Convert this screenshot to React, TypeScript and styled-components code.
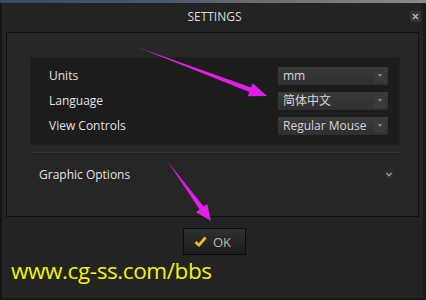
import React from 'react';
import styled, { createGlobalStyle } from 'styled-components';

const GlobalStyle = createGlobalStyle`
  html, body {
    margin: 0;
    padding: 0;
    background: #1f1f1f;
  }
  body {
    font-family: 'Open Sans', 'Noto Sans CJK SC', sans-serif;
  }
`;

const Page = styled.div`
  position: relative;
  width: 426px;
  height: 300px;
  overflow: hidden;
  display: flex;
  flex-direction: column;
  background: #232323;
`;

const Desktop = styled.div`
  height: 3px;
  background: linear-gradient(90deg, #3a4a66 0%, #4a5872 40%, #6c6c6c 60%, #8a8a8a 100%);
`;

const Dialog = styled.div`
  flex: 1;
  display: flex;
  flex-direction: column;
  background: #232323;
  border-left: 2px solid #151515;
  border-right: 3px solid #1a1a1a;
  border-bottom: 2px solid #161616;
`;

const TitleBar = styled.div`
  height: 27px;
  display: grid;
  grid-template-columns: 1fr auto 1fr;
  align-items: center;
`;

const Title = styled.div`
  grid-column: 2;
  color: #dcdcdc;
  font-size: 12px;
  padding-left: 4px;
`;

const CloseBtn = styled.div`
  justify-self: end;
  margin-right: 2px;
  width: 11px;
  height: 11px;
  background: #343434;
  display: flex;
  align-items: center;
  justify-content: center;
`;

const Panel = styled.div`
  margin: 2px 4px 0 4px;
  height: 185px;
  box-sizing: border-box;
  background: #262626;
  border: 1px solid #0f0f0f;
  padding: 24px 18px 0 23px;
  display: flex;
  flex-direction: column;
`;

const Inset = styled.div`
  height: 88px;
  box-sizing: border-box;
  background: #1c1c1c;
  border: 1px solid #202020;
  padding: 5px 11px 0 18px;
  display: flex;
  flex-direction: column;
`;

const Row = styled.div`
  height: 25px;
  display: flex;
  align-items: center;
  justify-content: space-between;
`;

const Label = styled.span`
  color: #e2e2e2;
  font-size: 12px;
`;

const Select = styled.div`
  width: 110px;
  height: 18px;
  display: flex;
  align-items: center;
  background: linear-gradient(#3a3a3a, #303030);
  box-sizing: border-box;
`;

const SelectText = styled.span`
  flex: 1;
  padding-left: 5px;
  color: #d4d4d4;
  font-size: 12px;
  line-height: 18px;
  white-space: nowrap;
`;

const SelectArrow = styled.span`
  width: 12px;
  height: 14px;
  margin-right: 2px;
  background: #3a3a3a;
  display: flex;
  align-items: center;
  justify-content: center;
  &::after {
    content: '';
    border-left: 2.5px solid transparent;
    border-right: 2.5px solid transparent;
    border-top: 3px solid #8a8a8a;
  }
`;

const Separator = styled.div`
  margin: 7px 0 0 2px;
  height: 1px;
  background: #363636;
  border-bottom: 1px solid #1e1e1e;
`;

const Section = styled.div`
  height: 40px;
  display: flex;
  align-items: center;
  justify-content: space-between;
  padding: 0 6px 0 9px;
`;

const Expand = styled.span`
  width: 10px;
  height: 10px;
  border-radius: 50%;
  background: #2c2c2c;
  display: flex;
  align-items: center;
  justify-content: center;
`;

const Footer = styled.div`
  display: flex;
  justify-content: center;
  padding: 11px 0 0 4px;
`;

const OkButton = styled.div`
  width: 63px;
  height: 27px;
  box-sizing: border-box;
  border: 1px solid #0c0c0c;
  background: linear-gradient(#303030, #262626 50%, #1c1c1c);
  display: flex;
  align-items: center;
  justify-content: center;
  gap: 6px;
  color: #b8b8b8;
  font-size: 13px;
  padding-right: 4px;
`;

const Watermark = styled.div`
  padding: 4px 0 0 9px;
  color: #f2f20a;
  font-family: 'Open Sans', sans-serif;
  font-size: 22.5px;
  line-height: 24px;
  letter-spacing: -0.4px;
`;

const Overlay = styled.svg`
  position: absolute;
  left: 0;
  top: 0;
  pointer-events: none;
`;

const settings = [
  { label: 'Units', value: 'mm' },
  { label: 'Language', value: '简体中文' },
  { label: 'View Controls', value: 'Regular Mouse' },
];

export default function App() {
  return (
    <>
      <GlobalStyle />
      <Page>
        <Desktop />
        <Dialog>
          <TitleBar>
            <Title>SETTINGS</Title>
            <CloseBtn>
              <svg width="7" height="7" viewBox="0 0 7 7">
                <path d="M1 1L6 6M6 1L1 6" stroke="#b0b0b0" strokeWidth="1.6" />
              </svg>
            </CloseBtn>
          </TitleBar>
          <Panel>
            <Inset>
              {settings.map((s) => (
                <Row key={s.label}>
                  <Label>{s.label}</Label>
                  <Select>
                    <SelectText>{s.value}</SelectText>
                    <SelectArrow />
                  </Select>
                </Row>
              ))}
            </Inset>
            <Separator />
            <Section>
              <Label>Graphic Options</Label>
              <Expand>
                <svg width="6" height="5" viewBox="0 0 6 5">
                  <path d="M0.5 1L3 3.8L5.5 1" stroke="#9a9a9a" strokeWidth="1.4" fill="none" />
                </svg>
              </Expand>
            </Section>
          </Panel>
          <Footer>
            <OkButton>
              <svg width="13" height="11" viewBox="0 0 13 11">
                <path d="M1.5 6L5 9.2L11.5 1.5" stroke="#f3b61f" strokeWidth="2.8" fill="none" strokeLinejoin="round" />
              </svg>
              OK
            </OkButton>
          </Footer>
          <Watermark>www.cg-ss.com/bbs</Watermark>
        </Dialog>
        <Overlay width="426" height="300" viewBox="0 0 426 300">
          <polygon
            points="137,47 251.1,87.4 252.7,83.2 267,96 247.7,96.2 249.3,92"
            fill="#e21ee6"
          />
          <polygon
            points="168,162 203.6,206.6 207.3,204 211,221 195.9,212.2 199.6,209.6"
            fill="#e21ee6"
          />
        </Overlay>
      </Page>
    </>
  );
}
